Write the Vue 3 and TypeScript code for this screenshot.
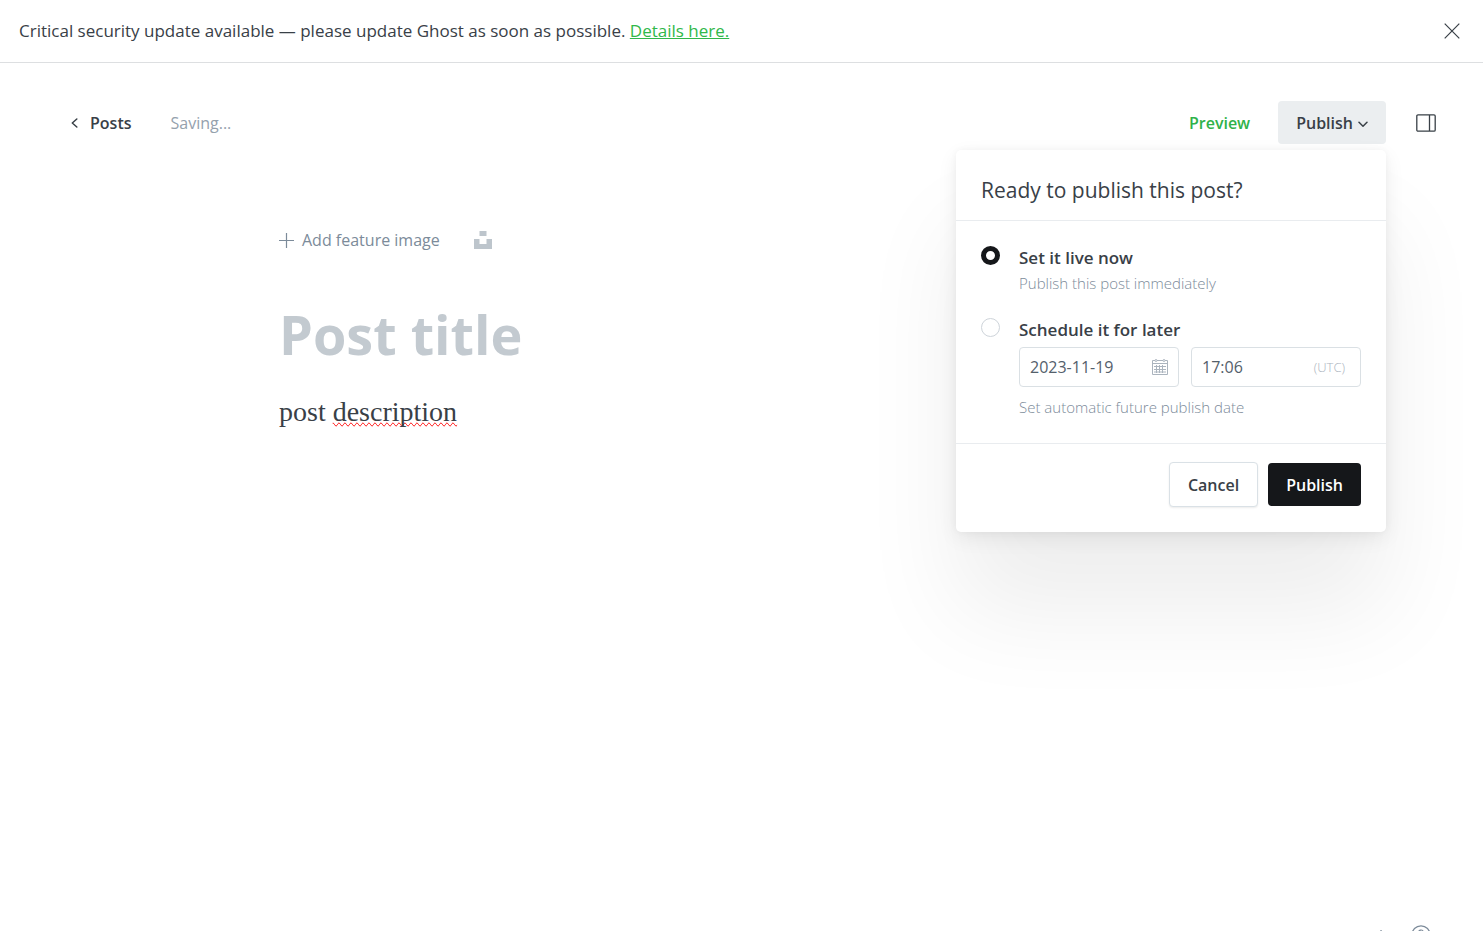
<script setup lang="ts">
import { ref } from 'vue'

type Timing = 'now' | 'later'

const showBanner = ref(true)
const menuOpen = ref(true)
const timing = ref<Timing>('now')
const title = ref('')
const date = ref('2023-11-19')
const time = ref('17:06')
</script>

<template>
  <div class="app">
    <aside v-if="showBanner" class="banner">
      <p>Critical security update available — please update Ghost as soon as possible. <a href="#">Details here.</a></p>
      <button type="button" class="plain" aria-label="Close" @click="showBanner = false">
        <svg width="16" height="16" viewBox="0 0 16 16" fill="none" stroke="#394047" stroke-width="1.2"><path d="M.7.7l14.6 14.6M15.3.7L.7 15.3" /></svg>
      </button>
    </aside>

    <header class="toolbar">
      <a href="#" class="back">
        <svg width="7" height="10" viewBox="0 0 7 10" fill="none" stroke="#394047" stroke-width="1.5" stroke-linecap="round" stroke-linejoin="round"><path d="M5.8 1L1.3 5l4.5 4" /></svg>
        Posts
      </a>
      <span class="status">Saving...</span>
      <button type="button" class="plain preview">Preview</button>
      <div class="publish">
        <button type="button" class="trigger" :aria-expanded="menuOpen" @click="menuOpen = !menuOpen">
          Publish
          <svg width="10" height="7" viewBox="0 0 10 7" fill="none" stroke="#394047" stroke-width="1.5" stroke-linecap="round" stroke-linejoin="round"><path d="M1 1.2l4 4 4-4" /></svg>
        </button>

        <form v-if="menuOpen" class="menu" @submit.prevent>
          <h2>Ready to publish this post?</h2>
          <div class="options">
            <div class="option">
              <input id="live" v-model="timing" type="radio" name="timing" value="now">
              <div class="detail">
                <label for="live">Set it live now</label>
                <p>Publish this post immediately</p>
              </div>
            </div>
            <div class="option">
              <input id="schedule" v-model="timing" type="radio" name="timing" value="later">
              <div class="detail">
                <label for="schedule">Schedule it for later</label>
                <div class="fields">
                  <div class="field">
                    <input v-model="date" type="text" aria-label="Publish date">
                    <svg width="16" height="16" viewBox="0 0 16 16" fill="none" stroke="#abb4be" stroke-width="1"><path d="M3 1.5H.5v14h15v-14H13M5 1.5h6M.5 4.500h15M2 7.5h12M2 10.5h12M2 13h12M4.5 6v8M7.5 6v8M10.5 6v8" /><circle cx="4" cy="1.5" r="1" /><circle cx="12" cy="1.5" r="1" /></svg>
                  </div>
                  <div class="field">
                    <input v-model="time" type="text" aria-label="Publish time">
                    <span class="zone">(UTC)</span>
                  </div>
                </div>
                <p>Set automatic future publish date</p>
              </div>
            </div>
          </div>
          <footer>
            <button type="button" class="cancel" @click="menuOpen = false">Cancel</button>
            <button type="submit" class="confirm">Publish</button>
          </footer>
        </form>
      </div>
      <button type="button" class="plain" aria-label="Settings">
        <svg width="20" height="18" viewBox="0 0 20 18" fill="none" stroke="#394047" stroke-width="1.3"><rect x=".8" y=".8" width="18.4" height="16.4" rx="1.2" /><path d="M13.5 1v16" /></svg>
      </button>
    </header>

    <main class="editor">
      <div class="feature">
        <button type="button" class="plain add">
          <svg width="15" height="15" viewBox="0 0 15 15" fill="none" stroke="#7c8b9a" stroke-width="1.2"><path d="M7.5 0v15M0 7.5h15" /></svg>
          Add feature image
        </button>
        <button type="button" class="plain" aria-label="Unsplash">
          <svg width="18" height="18" viewBox="0 0 18 18" fill="#bdc5cc"><path d="M5.5 0h7v5h-7zM0 8h5.5v5h7V8H18v10H0z" /></svg>
        </button>
      </div>
      <input v-model="title" class="title" type="text" placeholder="Post title" aria-label="Post title">
      <div class="body" role="textbox" aria-label="Post body" contenteditable="true" spellcheck="false">post <span class="misspelt">description</span></div>
    </main>

    <div class="corner">
      <span>2 words</span>
      <button type="button" class="plain" aria-label="Help">
        <svg width="20" height="20" viewBox="0 0 20 20" fill="none" stroke="#7c8b9a" stroke-width="1.2"><circle cx="10" cy="10" r="9.2" /><path d="M7.5 7.5a2.5 2.5 0 1 1 3.5 2.300q-1 .5-1 1.700M10 14v1.2" /></svg>
      </button>
    </div>
  </div>
</template>

<style>
body {
  margin: 0;
  background: #fff;
}
</style>

<style scoped>
.app {
  position: relative;
  min-height: 100vh;
  box-sizing: border-box;
  font: 400 16px/24px "Open Sans", "Noto Sans", sans-serif;
  color: #394047;
}
p,
h2 {
  margin: 0;
}
button,
input {
  font: inherit;
  color: inherit;
}
button {
  cursor: pointer;
}
svg {
  display: block;
  flex: none;
}
.plain {
  padding: 0;
  border: 0;
  background: none;
}

.banner {
  display: flex;
  align-items: center;
  justify-content: space-between;
  padding: 19px 23px 19px 19px;
  border-bottom: 1px solid #dddfe1;
  font-size: 17px;
}
.banner a {
  color: #30b84a;
}

.toolbar {
  display: flex;
  align-items: center;
  padding: 38px 47px 0 71px;
}
.back {
  display: flex;
  align-items: center;
  gap: 12px;
  color: #394047;
  font-weight: 600;
  text-decoration: none;
}
.status {
  margin-left: 39px;
  color: #95a1ad;
}
.preview {
  margin-left: auto;
  color: #30b24a;
  font-weight: 600;
}
.publish {
  position: relative;
  margin: 0 30px 0 28px;
}
.trigger {
  display: flex;
  align-items: center;
  gap: 5px;
  height: 43px;
  padding: 0 18px;
  border: 0;
  border-radius: 4px;
  background: #ebeef0;
  font-weight: 600;
}
.trigger svg {
  margin-top: 4px;
}

.menu {
  position: absolute;
  z-index: 1;
  top: 49px;
  right: 0;
  width: 430px;
  border-radius: 5px;
  background: #fff;
  box-shadow:
    0 0 7px rgba(0, 0, 0, 0.04),
    0 6px 20px rgba(0, 0, 0, 0.07),
    0 80px 100px rgba(0, 0, 0, 0.07);
}
.menu h2 {
  padding: 25px 25px 15px;
  border-bottom: 1px solid #e9ecef;
  font-size: 21px;
  font-weight: 400;
  line-height: 30px;
}
.options {
  display: grid;
  gap: 22px;
  padding: 25px 25px 23px;
}
.option {
  display: flex;
  gap: 19px;
}
.option input[type="radio"] {
  flex: none;
  width: 19px;
  height: 19px;
  box-sizing: border-box;
  margin: 0;
  appearance: none;
  border: 1px solid #ced4da;
  border-radius: 50%;
  background: #fff;
}
.option input[type="radio"]:checked {
  border: 5px solid #15171a;
}
.detail {
  flex: 1;
  min-width: 0;
}
.detail label {
  display: block;
  font-size: 17px;
  font-weight: 600;
}
.detail p {
  color: #7c8b9a;
  font-size: 15px;
  font-weight: 300;
  line-height: 26px;
}
.fields {
  display: grid;
  grid-template-columns: minmax(0, 160fr) minmax(0, 170fr);
  gap: 12px;
  margin: 5px 0 7px;
}
.field {
  display: flex;
  align-items: center;
  height: 40px;
  box-sizing: border-box;
  padding: 0 10px;
  border: 1px solid #dae0e4;
  border-radius: 4px;
}
.field input {
  flex: 1;
  min-width: 0;
  padding: 0;
  border: 0;
  outline: 0;
  background: none;
  color: #54606b;
}
.zone {
  padding-right: 5px;
  color: #abb4be;
  font-size: 13px;
  font-weight: 300;
}
.menu footer {
  display: flex;
  align-items: center;
  justify-content: flex-end;
  gap: 10px;
  padding: 18px 25px 25px;
  border-top: 1px solid #e9ecef;
}
.cancel,
.confirm {
  height: 43px;
  padding: 0 18px;
  border: 0;
  border-radius: 4px;
  font-weight: 600;
}
.cancel {
  height: 45px;
  border: 1px solid #dae1e6;
  background: #fff;
  box-shadow: 0 1px 2px rgba(0, 0, 0, 0.08);
}
.confirm {
  background: #15171a;
  color: #fff;
}

.editor {
  max-width: 925px;
  margin: 0 auto;
  padding: 84px 20px 0;
}
@media (min-width: 1000px) {
  .editor {
    padding: 84px 0 0;
  }
}
.feature {
  display: flex;
  align-items: center;
  gap: 34px;
  color: #7c8b9a;
}
.add {
  display: flex;
  align-items: center;
  gap: 8px;
}
.title {
  display: block;
  width: 100%;
  height: 76px;
  margin: 44px 0 0;
  padding: 0;
  border: 0;
  outline: 0;
  background: none;
  font-size: 54px;
  font-weight: 700;
  line-height: 76px;
}
.title::placeholder {
  color: #c3cad0;
  opacity: 1;
}
.body {
  margin-top: 20px;
  outline: 0;
  font: 28px/40px "Liberation Serif", serif;
}
.misspelt {
  text-decoration: spelling-error;
}

.corner {
  position: fixed;
  right: 52px;
  bottom: -14px;
  display: flex;
  align-items: center;
  gap: 21px;
  color: #7c8b9a;
  font-size: 15px;
  line-height: 20px;
}
</style>
